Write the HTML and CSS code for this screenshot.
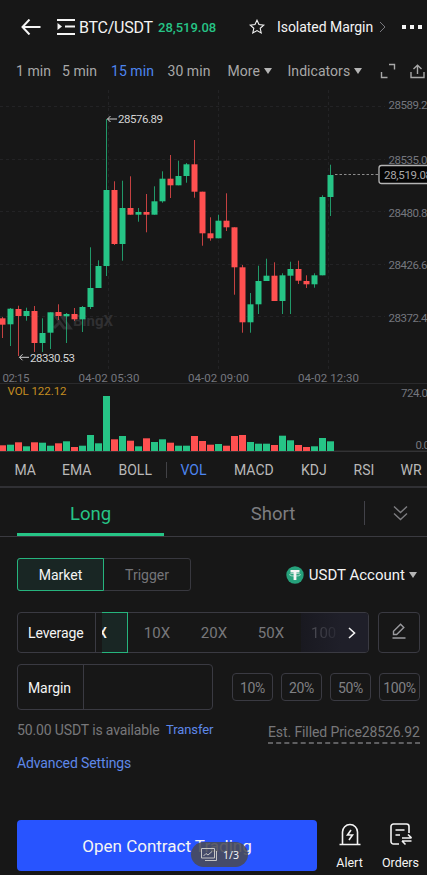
FILE: index.html
```html
<!DOCTYPE html>
<html lang="en">
<head>
    <meta charset="UTF-8">
    <meta name="viewport" content="width=device-width, initial-scale=1.0">
    <title>BTC/USDT</title>
    <link rel="stylesheet" href="styles.css">
</head>
<body>
    <header class="top-bar">
        <svg class="back" width="20" height="16" viewBox="0 0 20 16"><path d="M8.500 0.500L1.500 8L8.500 15.500M1.500 8H19.500"/></svg>
        <svg class="list-icon" width="18" height="16" viewBox="0 0 18 16"><path d="M0 1H18M8 7.500H18M0 15H18"/><path class="solid" d="M0.500 4L5 7.500L0.500 11Z"/></svg>
        <h1>BTC/USDT</h1>
        <span class="last-price">28,519.08</span>
        <svg class="star" width="16" height="16" viewBox="0 0 16 16"><path d="M8 1.200L10 5.600L14.800 6.100L11.200 9.300L12.200 14L8 11.600L3.800 14L4.800 9.300L1.200 6.100L6 5.600Z"/></svg>
        <span class="margin-mode">Isolated Margin</span>
        <svg class="go" width="7" height="12" viewBox="0 0 7 12"><path d="M1 1L6 6L1 11"/></svg>
        <span class="dots"><i></i><i></i><i></i></span>
    </header>

    <nav class="intervals">
        <span class="m1">1 min</span>
        <span class="m5">5 min</span>
        <span class="m15 active">15 min</span>
        <span class="m30">30 min</span>
        <span class="more">More<i class="caret"></i></span>
        <span class="inds">Indicators<i class="caret"></i></span>
        <svg class="expand" width="16" height="16" viewBox="0 0 16 16"><path d="M9 1.500H14.500V6.500M1.500 9V14.500H7.500"/></svg>
        <svg class="share" width="15" height="15" viewBox="0 0 15 15"><path d="M7.500 10V1.500M3.500 5L7.500 1.300L11.500 5M1 8V13.500H14V8"/></svg>
    </nav>

    <svg class="chart" width="427" height="362" viewBox="0 90 427 362">
        <path class="grid" d="M0 106.500H385M0 159.500H385M0 211.500H385M0 264.500H385M0 316.500H385M108.500 90V370M218.500 90V370M328.500 90V370"/>
        <path class="rule" d="M0 383.500H427"/>
        <path class="rule base" d="M0 451.200H427"/>
        <g class="watermark">
            <path d="M54 314H60L70 328H64ZM68 314L63 320M60 322L54 328"/>
            <text x="73" y="326" textLength="40" lengthAdjust="spacingAndGlyphs">BingX</text>
        </g>
        <g id="candles"></g>
        <path class="last-line" d="M335 174.500H379"/>
        <g class="axis">
            <text x="388.500" y="108.500" textLength="45">28589.24</text>
            <text x="388.500" y="164" textLength="45">28535.04</text>
            <text x="388.500" y="216.500" textLength="45">28480.84</text>
            <text x="388.500" y="269" textLength="45">28426.64</text>
            <text x="388.500" y="321.500" textLength="45">28372.44</text>
            <text x="2.500" y="382" textLength="27">02:15</text>
            <text x="78.500" y="382" textLength="61">04-02 05:30</text>
            <text x="188" y="382" textLength="61">04-02 09:00</text>
            <text x="298" y="382" textLength="61">04-02 12:30</text>
            <text x="401" y="396.500" textLength="33">724.07</text>
            <text x="415.500" y="449" textLength="20">0.00</text>
        </g>
        <rect class="tag" x="379" y="165.500" width="60" height="18" rx="2.500"/>
        <text class="tag-text" x="384" y="179" textLength="48">28,519.08</text>
        <g class="mark">
            <path d="M107.500 119H117M110.500 116L107.500 119L110.500 122"/>
            <text x="118" y="123.300" textLength="45">28576.89</text>
            <path d="M19.500 357.300H29M22.500 354.300L19.500 357.300L22.500 360.300"/>
            <text x="30" y="361.500" textLength="45">28330.53</text>
        </g>
        <text class="vol" x="7.500" y="395" textLength="59">VOL 122.12</text>
    </svg>

    <nav class="studies">
        <span class="ma">MA</span>
        <span class="ema">EMA</span>
        <span class="boll">BOLL</span>
        <i class="sep"></i>
        <span class="volume active">VOL</span>
        <span class="macd">MACD</span>
        <span class="kdj">KDJ</span>
        <span class="rsi">RSI</span>
        <span class="wr">WR</span>
    </nav>

    <nav class="sides">
        <span class="side long">Long</span>
        <span class="side">Short</span>
        <span class="collapse"><svg width="15" height="16" viewBox="0 0 15 16"><path d="M1 1.500L7.500 7.500L14 1.500M1 8.500L7.500 14.500L14 8.500"/></svg></span>
    </nav>

    <main class="order-form">
        <div class="row type-row">
            <div class="order-type"><span class="on">Market</span><span>Trigger</span></div>
            <div class="account">
                <svg width="18" height="18" viewBox="0 0 18 18"><circle cx="9" cy="9" r="8.700"/><path class="tether" d="M4.500 4H13.500V6.500H10.400V14H7.600V6.500H4.500Z"/><ellipse cx="9" cy="8.700" rx="5.500" ry="1.400"/></svg>
                <span>USDT Account</span><i class="caret"></i>
            </div>
        </div>

        <div class="row leverage-row">
            <div class="leverage">
                <span class="label">Leverage</span>
                <span class="current"><b>X</b></span>
                <span class="lev">10X</span>
                <span class="lev">20X</span>
                <span class="lev">50X</span>
                <span class="next"><em>100X</em><svg width="8" height="12" viewBox="0 0 8 12"><path d="M1 1L6.500 6L1 11"/></svg></span>
            </div>
            <div class="edit"><svg width="14" height="16" viewBox="0 0 14 16"><path d="M1.500 11.500V8.300L8.600 1.200L11.800 4.400L4.700 11.500ZM0.500 15H13.500"/></svg></div>
        </div>

        <div class="row margin-row">
            <div class="amount"><span class="label">Margin</span></div>
            <div class="percents"><span>10%</span><span>20%</span><span>50%</span><span>100%</span></div>
        </div>

        <div class="row info-row">
            <span class="available">50.00 USDT is available</span>
            <a class="transfer">Transfer</a>
            <span class="estimate"><span>Est. Filled Price28526.92</span><svg width="152" height="2"><path d="M0 1H152"/></svg></span>
        </div>
        <a class="advanced">Advanced Settings</a>
    </main>

    <footer class="bottom-bar">
        <button class="open-trade"><span>Open Contract Trading</span></button>
        <div class="action alert">
            <svg width="22" height="23" viewBox="0 0 22 23"><path d="M3.500 21V9A7.500 7.500 0 0 1 18.500 9V21M0.500 21.500H21.500M12 7L8.500 12H13.500L10 17"/></svg>
            <span>Alert</span>
        </div>
        <div class="action orders">
            <svg width="22" height="23" viewBox="0 0 22 23"><path d="M19 10V3.500A2.500 2.500 0 0 0 16.500 1H3.500A2.500 2.500 0 0 0 1 3.500V18.500A2.500 2.500 0 0 0 3.500 21H9M5.500 7H14.500M5.500 12H10M21.500 15H12M18 11.500L21.500 15M12 18H21.500M12 18L15.500 21.500"/></svg>
            <span>Orders</span>
        </div>
        <div class="pager">
            <svg width="16" height="14" viewBox="0 0 16 14"><path d="M0.500 0.500H13.500V10H0.500ZM4 12.500H15.500V3M2.500 8L5 5.500L7 7L11 3.500"/></svg>
            <span>1/3</span>
        </div>
    </footer>

    <script src="chart.js"></script>
</body>
</html>
```
FILE: styles.css
```css
* {
    box-sizing: border-box;
}

body {
    margin: 0;
    width: 427px;
    height: 875px;
    overflow: hidden;
    background-color: #171717;
    color: #f4f4f4;
    font-family: Roboto, "Liberation Sans", sans-serif;
    font-size: 14px;
}

svg {
    display: block;
    flex: none;
    fill: none;
    stroke: currentColor;
}

span, a {
    white-space: nowrap;
}

.caret {
    display: inline-block;
    border: 4.500px solid transparent;
    border-top: 6px solid #b5b5b5;
    border-bottom: 0;
    margin-left: 4px;
    vertical-align: 2px;
}

/* header */
.top-bar {
    display: flex;
    align-items: center;
    height: 54px;
    padding-left: 21px;
}

.back {
    stroke-width: 2;
}

.list-icon {
    margin-left: 16px;
    stroke-width: 1.8;
}

.solid {
    fill: #f4f4f4;
    stroke: none;
}

.top-bar h1 {
    width: 74px;
    margin: 0 0 0 4px;
    font-size: 16px;
    font-weight: 400;
    letter-spacing: -0.25px;
}

.last-price {
    width: 58px;
    margin-left: 5px;
    color: #26c486;
    font-size: 13px;
    font-weight: 500;
}

.star {
    margin-left: 33px;
    stroke-width: 1.1;
}

.margin-mode {
    width: 96px;
    margin-left: 12px;
    letter-spacing: -0.05px;
}

.go {
    margin-left: 6px;
    color: #77777c;
}

.dots {
    display: flex;
    gap: 4px;
    margin-left: 16px;
}

.dots i {
    width: 4px;
    height: 4px;
    background-color: #f4f4f4;
}

/* intervals */
.intervals {
    display: flex;
    align-items: center;
    height: 36px;
    padding: 0 0 2px 16px;
    color: #a8a8a8;
    letter-spacing: 0.05px;
}

.active {
    color: #4d85f0;
}

.m1 { width: 46px; }
.m5 { width: 49px; }
.m15 { width: 56.500px; }
.m30 { width: 60px; }
.more { width: 60px; }
.inds { width: 92px; }

.share {
    margin-left: 14px;
}

.expand, .share {
    stroke-width: 1.4;
}

/* chart */
.chart {
    font-size: 11.500px;
}

.chart text {
    stroke: none;
}

.grid {
    stroke: #232325;
    stroke-dasharray: 3 3;
}

.rule {
    stroke: #2a2a2c;
}

.base {
    stroke: #414143;
}

.watermark {
    color: #303032;
    font-size: 15px;
    font-weight: 700;
    stroke-width: 3;
}

.watermark text {
    fill: #303032;
}

.up {
    fill: #26c486;
    stroke: none;
}

.down {
    fill: #ff5050;
    stroke: none;
}

.wick {
    opacity: 0.75;
}

.last-line {
    stroke: #8c8c8c;
    stroke-dasharray: 2.500 2;
}

.axis {
    fill: #74767e;
}

.tag {
    fill: #050505;
    stroke: #b4b4b4;
    stroke-width: 1.3;
}

.tag-text {
    fill: #a8a8a8;
}

.mark {
    fill: #d4d4d4;
    stroke: #d4d4d4;
}

.mark path {
    fill: none;
}

.vol {
    fill: #c58d20;
}

/* studies */
.studies {
    display: flex;
    align-items: center;
    height: 36px;
    padding: 1px 0 0 14.500px;
    border-bottom: 2px solid #303034;
    color: #b9b9b9;
}

.studies .active {
    color: #4d85f0;
}

.ma { width: 47.500px; }
.ema { width: 56.500px; }
.boll { width: 47.500px; }
.volume { width: 53.500px; }
.macd { width: 67px; }
.kdj { width: 52.500px; }
.rsi { width: 47px; }

.sep {
    width: 1px;
    height: 16px;
    margin-right: 13.500px;
    background-color: #424246;
}

/* long / short */
.sides {
    display: flex;
    height: 49px;
    padding-left: 17px;
    border-bottom: 1px solid #3a3a40;
    color: #7d7d80;
    font-size: 18.500px;
}

.side {
    width: 147px;
    margin-right: 36px;
    line-height: 52px;
    text-align: center;
}

.side.long {
    border-bottom: 3px solid #26c486;
    color: #26c486;
}

.side + .side {
    width: 146px;
    margin-right: 18px;
}

.collapse {
    height: 24px;
    margin-top: 13px;
    padding: 4px 0 0 28px;
    border-left: 1px solid #424249;
}

.collapse svg {
    stroke-width: 1.4;
}

/* order form */
.row {
    display: flex;
}

.order-form {
    height: 283px;
    padding: 21px 7px 0 17px;
}

.type-row {
    justify-content: space-between;
    align-items: center;
    height: 33px;
}

.order-type {
    display: flex;
    width: 174px;
    height: 33px;
    border: 1px solid #38383f;
    border-radius: 3px;
    color: #757579;
    line-height: 32px;
    text-align: center;
}

.order-type span {
    flex: 1;
}

.order-type .on {
    flex: 0 0 87px;
    margin: -1px 0 -1px -1px;
    border: 1px solid #26b47d;
    border-radius: 3px 0 0 3px;
    background-color: #192624;
    color: #f4f4f4;
}

.account {
    display: flex;
    align-items: center;
    margin-right: 3px;
    font-size: 15px;
}

.account svg {
    margin-right: 5px;
}

.account circle {
    fill: #26a17b;
    stroke: none;
}

.account ellipse {
    stroke-width: 0.6;
}

.tether {
    fill: #f4f4f4;
    stroke: none;
}

.leverage-row {
    justify-content: space-between;
    margin-top: 21px;
}

.leverage, .edit, .amount {
    display: flex;
    height: 41px;
    border: 1px solid #3a3a42;
    border-radius: 4px;
}

.leverage {
    width: 352px;
    line-height: 40px;
}

.label {
    padding-left: 10px;
    border-right: 1px solid #3a3a42;
}

.leverage .label {
    width: 78px;
    letter-spacing: -0.1px;
}

.current {
    width: 26px;
    margin: -1px 0 -1px 6px;
    overflow: hidden;
    border: 1px solid #26b47d;
    border-left: 0;
    background-color: #192624;
}

.current b {
    margin-left: -4px;
    font-weight: 500;
}

.lev {
    width: 57px;
    padding-left: 1px;
    color: #77777b;
    font-size: 15px;
    text-align: center;
}

.next {
    display: flex;
    align-items: center;
    width: 67px;
    margin-left: 2px;
    padding-left: 10px;
    border-radius: 0 3px 3px 0;
    background-image: linear-gradient(90deg, #191920, #1f1f29 60%);
}

.next em {
    width: 26px;
    margin-right: 11px;
    overflow: hidden;
    background-image: linear-gradient(90deg, #4d4d55, #292933);
    background-clip: text;
    color: transparent;
    font-size: 15px;
    font-style: normal;
}

.next svg {
    stroke-width: 1.6;
}

.edit {
    justify-content: center;
    align-items: center;
    width: 42px;
    color: #9a9a9e;
}

.edit svg {
    stroke-width: 1.4;
    margin-bottom: 3px;
}

.margin-row {
    justify-content: space-between;
    align-items: center;
    margin-top: 11px;
}

.amount {
    width: 196px;
    height: 46px;
    line-height: 46px;
}

.amount .label {
    width: 66px;
    letter-spacing: -0.1px;
}

.percents {
    display: flex;
    gap: 8px;
}

.percents span {
    width: 41px;
    height: 28px;
    border: 1px solid #3a3a42;
    border-radius: 4px;
    color: #808084;
    letter-spacing: -0.3px;
    line-height: 28px;
    text-align: center;
}

.info-row {
    height: 40px;
    padding-top: 12px;
    color: #77777a;
    line-height: 16px;
}

.available {
    width: 149px;
    letter-spacing: -0.13px;
}

.transfer, .advanced {
    color: #5e88e8;
}

.transfer {
    font-size: 13px;
    letter-spacing: -0.1px;
}

.estimate {
    margin: 2px 0 0 auto;
    letter-spacing: -0.1px;
}

.estimate svg {
    margin-top: 2px;
    stroke-dasharray: 5 3.170;
    stroke-width: 1.3;
}

.advanced {
    display: block;
    margin-top: 5px;
    letter-spacing: -0.13px;
    line-height: 16px;
}

/* bottom bar */
.bottom-bar {
    position: relative;
    display: flex;
    padding-left: 17px;
}

.open-trade {
    width: 300px;
    height: 51px;
    padding: 0;
    border: 0;
    border-radius: 4px;
    background-color: #2854ff;
    color: #f4f4f4;
    font-family: inherit;
    font-size: 17px;
}

.action {
    display: flex;
    flex-direction: column;
    align-items: center;
    width: 51px;
    padding-top: 3px;
    font-size: 12.500px;
}

.action svg {
    height: 23px;
    stroke-width: 1.6;
}

.action span {
    margin-top: 9px;
}

.alert {
    margin-left: 7px;
}

.pager {
    position: absolute;
    top: 22px;
    left: 191px;
    display: flex;
    align-items: center;
    gap: 6px;
    width: 57px;
    height: 25px;
    padding-left: 10px;
    border-radius: 13px;
    background-color: rgba(73, 74, 85, 0.88);
    font-family: "Noto Sans", sans-serif;
    font-size: 10.500px;
}

.pager svg {
    color: #c5c5c5;
}
```
FILE: chart.js
```js
// [direction, high, body top, body bottom, low, volume]
const candles = [
    ['down', 317, 318.3, 324.7, 338, 5.7],
    ['up', 308, 308.7, 324.3, 346, 6.3],
    ['down', 305.7, 309, 316, 356, 8.7],
    ['up', 307.7, 311, 316, 320.7, 4.7],
    ['down', 306, 311, 343, 352, 8.7],
    ['up', 318.3, 333, 343, 352, 8.3],
    ['up', 312.3, 312.3, 332.7, 349, 5.3],
    ['down', 304.3, 312, 316, 320, 7.7],
    ['up', 313, 314, 316.3, 343, 9.7],
    ['down', 308, 314, 319.3, 321, 4],
    ['up', 306, 307, 319.3, 332, 5.3],
    ['up', 247.3, 288, 307, 309, 16],
    ['up', 260.3, 266, 288, 288, 7.7],
    ['up', 119, 190, 266, 276, 55],
    ['down', 181.3, 190, 244, 245, 11.7],
    ['up', 180.7, 208, 244, 260.7, 15],
    ['down', 176.3, 208, 214.7, 214.7, 10.3],
    ['up', 208, 212, 214.7, 221.7, 4.7],
    ['down', 194, 212, 214.7, 232.3, 12.7],
    ['up', 186.3, 201.3, 214.7, 214.7, 9],
    ['up', 171.3, 178.7, 201.3, 202.7, 11.7],
    ['down', 155, 178.7, 185.3, 198, 8.3],
    ['up', 160.7, 176, 185.3, 185.3, 5.3],
    ['up', 163, 164.3, 176, 182.7, 5.3],
    ['down', 140, 164.3, 191.7, 197.7, 15],
    ['down', 191.7, 191.7, 233.3, 245.7, 10],
    ['down', 217.3, 233.3, 238.3, 240.7, 6.3],
    ['up', 214.7, 220.7, 238.3, 238.3, 7],
    ['down', 193.3, 220.7, 227.3, 231, 5.3],
    ['down', 227.3, 227.3, 267.3, 294.7, 15],
    ['down', 265, 267.3, 322.3, 332.7, 16],
    ['up', 293, 304.3, 322.3, 332.7, 9],
    ['up', 265.7, 281, 304.3, 314, 7.3],
    ['up', 258.7, 275.7, 281, 281, 7.3],
    ['down', 262.3, 275.7, 301, 301, 6],
    ['up', 273.3, 275.3, 301, 314, 15.3],
    ['up', 261.7, 269, 275.7, 314, 10.7],
    ['down', 260.7, 269, 280.7, 284, 6],
    ['down', 275.3, 281, 284.3, 288, 4],
    ['up', 273.3, 275.3, 284.3, 287.7, 4.7],
    ['up', 195.3, 197, 275.3, 275.3, 13],
    ['up', 164.7, 175, 197, 216, 9.7]
];

const rect = (cls, x, y, w, h) =>
    `<rect class="${cls}" x="${x}" y="${y}" width="${w}" height="${h}"/>`;

document.getElementById('candles').innerHTML = candles.map(([dir, high, top, bottom, low, vol], i) => {
    const x = 2.5 + i * 8;
    return rect(dir + ' wick', x - 0.5, high, 1, low - high)
        + rect(dir, x - 3, top, 6, bottom - top)
        + rect(dir, x - 3.5, 451 - vol, 7, vol);
}).join('');
```
